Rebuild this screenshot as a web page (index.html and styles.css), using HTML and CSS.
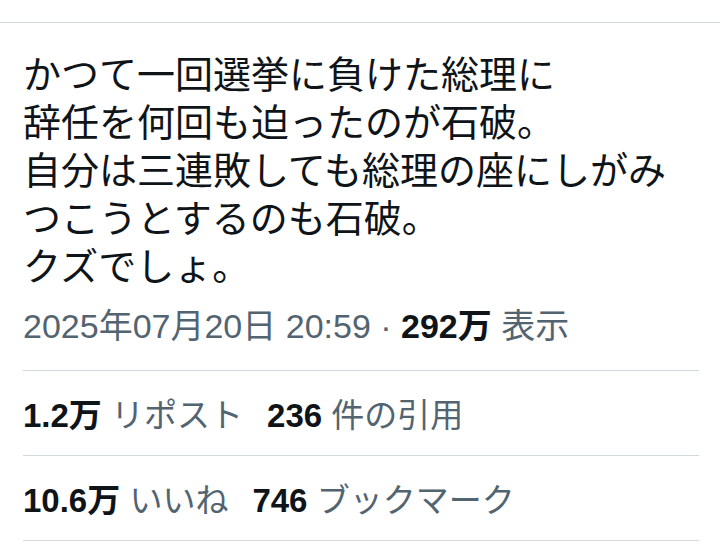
FILE: index.html
```html
<!DOCTYPE html>
<html lang="ja">
<head>
<meta charset="UTF-8">
<meta name="viewport" content="width=device-width, initial-scale=1.0">
<title>ポスト</title>
<link rel="stylesheet" href="styles.css">
</head>
<body>
<div class="topline"></div>
<div class="post">
  <p class="tweet">かつて一回選挙に負けた総理に<br>辞任を何回も迫ったのが石破。<br>自分は三連敗しても総理の座にしがみ<br>つこうとするのも石破。<br>クズでしょ。</p>
  <div class="meta">
    <span>2025年07月20日 20:59</span> · <b>292万</b> 表示
  </div>
  <div class="stats">
    <span><b>1.2万</b> リポスト</span>
    <span><b>236</b> 件の引用</span>
  </div>
  <div class="stats">
    <span><b>10.6万</b> いいね</span>
    <span><b>746</b> ブックマーク</span>
  </div>
</div>
</body>
</html>
```

FILE: styles.css
```css
body {
  margin: 0;
  background: #fff;
  font-family: "Noto Sans CJK JP", sans-serif;
  color: #0f1419;
}
.topline {
  margin-top: 22px;
  border-top: 1px solid #cfd9de;
}
.post {
  padding: 0 21px 0 23px;
}
.tweet {
  margin: 25px 0 0;
  font-size: 38px;
  line-height: 48px;
}
.meta,
.stats {
  font-family: "Liberation Sans", "Noto Sans CJK JP", sans-serif;
  color: #536471;
}
.meta {
  margin-top: 17px;
  padding-bottom: 23px;
  font-size: 34px;
  line-height: 42px;
  border-bottom: 1px solid #cfd9de;
}
.meta b,
.stats b {
  color: #0f1419;
}
.stats {
  display: flex;
  gap: 24px;
  align-items: center;
  height: 84px;
  font-size: 33px;
  border-bottom: 1px solid #cfd9de;
}
```
